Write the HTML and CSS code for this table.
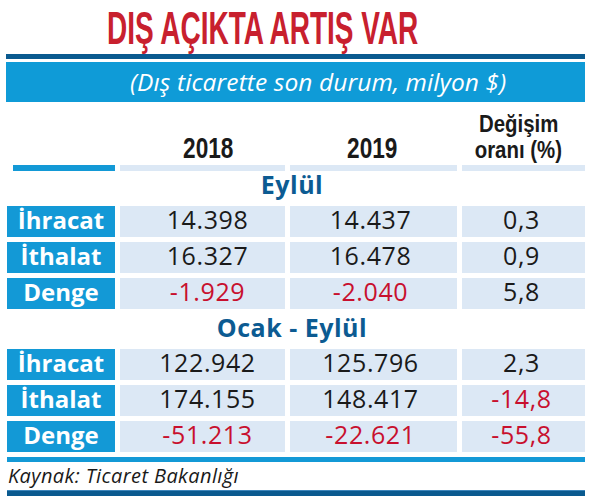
FILE: index.html
```html
<!DOCTYPE html>
<html lang="tr">
<head>
<meta charset="utf-8">
<title>Dış açıkta artış var</title>
<link rel="stylesheet" href="styles.css">
</head>
<body>
<div class="page">
  <h1 class="title"><span class="title-text">DIŞ AÇIKTA ARTIŞ VAR</span></h1>
  <div class="rule-dark"></div>
  <div class="subbar">(Dış ticarette son durum, milyon $)</div>

  <div class="grid head">
    <div></div>
    <div class="hcell c1"><span class="cond year">2018</span></div>
    <div class="hcell c2"><span class="cond year">2019</span></div>
    <div class="hcell c3"><span class="cond small">Değişim</span><span class="cond small">oranı (%)</span></div>
  </div>
  <div class="grid sep">
    <div class="sep-label"></div>
    <div class="sep-cell"></div>
    <div class="sep-cell"></div>
    <div class="sep-cell"></div>
  </div>

  <div class="section first">Eylül</div>
  <div class="grid rows">
    <div class="label">İhracat</div><div class="cell c1">14.398</div><div class="cell c2">14.437</div><div class="cell c3">0,3</div>
    <div class="label">İthalat</div><div class="cell c1">16.327</div><div class="cell c2">16.478</div><div class="cell c3">0,9</div>
    <div class="label">Denge</div><div class="cell c1 neg">-1.929</div><div class="cell c2 neg">-2.040</div><div class="cell c3">5,8</div>
  </div>

  <div class="section second">Ocak - Eylül</div>
  <div class="grid rows">
    <div class="label">İhracat</div><div class="cell c1">122.942</div><div class="cell c2">125.796</div><div class="cell c3">2,3</div>
    <div class="label">İthalat</div><div class="cell c1">174.155</div><div class="cell c2">148.417</div><div class="cell c3 neg">-14,8</div>
    <div class="label">Denge</div><div class="cell c1 neg">-51.213</div><div class="cell c2 neg">-22.621</div><div class="cell c3 neg">-55,8</div>
  </div>

  <div class="rule-blue"></div>
  <div class="source">Kaynak: Ticaret Bakanlığı</div>
  <div class="rule-bottom"></div>
</div>
</body>
</html>
```

FILE: styles.css
```css
html, body {
  margin: 0;
  padding: 0;
  background: #ffffff;
}

.page {
  width: 590px;
  font-family: "Open Sans", "Noto Sans", sans-serif;
  color: #1a1a1a;
}

.title {
  margin: 0;
  height: 54px;
  box-sizing: border-box;
  padding: 2px 0 0 107px;
  font-family: "Liberation Sans", Arial, sans-serif;
  font-weight: bold;
  font-size: 46px;
  line-height: 52px;
  color: #c8202e;
  white-space: nowrap;
}

.title-text {
  display: inline-block;
  transform: scaleX(0.608);
  transform-origin: left center;
}

.rule-dark {
  margin: 0 5px 0 6px;
  height: 5px;
  background: #0a5a8f;
}

.subbar {
  margin: 3px 5px 0 6px;
  height: 40px;
  box-sizing: border-box;
  padding-left: 124px;
  background: #0f9bd7;
  color: #ffffff;
  font-style: italic;
  font-size: 24.5px;
  letter-spacing: 0.1px;
  line-height: 40px;
  white-space: nowrap;
}

.grid {
  display: grid;
  grid-template-columns: 108px 165px 167px 123px;
  column-gap: 5px;
  margin-left: 7px;
  width: 578px;
}

.head {
  height: 63px;
  align-items: end;
  padding-bottom: 2px;
  box-sizing: border-box;
}

.hcell {
  display: flex;
  flex-direction: column;
  align-items: center;
  font-family: "Liberation Sans", Arial, sans-serif;
  font-weight: bold;
  color: #1a1a1a;
}

.cond {
  display: inline-block;
  white-space: nowrap;
}

.year {
  font-size: 29px;
  line-height: 29px;
  transform: scaleX(0.78);
}

.small {
  font-size: 24px;
  line-height: 26px;
  transform: scaleX(0.85);
}

.hcell.c1 { padding-left: 11px; }
.hcell.c2 { padding-right: 3px; }
.hcell.c3 { padding-right: 10px; }

.sep {
  height: 6px;
}

.sep-label {
  margin-left: 6px;
  background: #1399d6;
}

.sep-cell {
  background: #dce8f5;
}

.section {
  width: 578px;
  margin-left: 7px;
  text-align: center;
  font-weight: bold;
  font-size: 25px;
  letter-spacing: 0.5px;
  line-height: 24px;
  color: #0c5b92;
  padding-bottom: 10px;
  padding-right: 8px;
  box-sizing: border-box;
}

.section.first { padding-top: 1px; }
.section.second { padding-top: 6px; }

.rows {
  row-gap: 5px;
}

.label,
.cell {
  height: 31px;
  box-sizing: border-box;
  padding-bottom: 4px;
  line-height: 27px;
  font-size: 24px;
  text-align: center;
  white-space: nowrap;
}

.label {
  background: #1399d6;
  color: #ffffff;
  font-weight: bold;
}

.cell {
  background: #dce8f5;
  color: #1a1a1a;
  font-size: 25px;
  letter-spacing: 0.6px;
}

.cell.c1 { padding-left: 10px; }
.cell.c2 { padding-right: 6px; }
.cell.c3 { padding-right: 4px; }

.cell.neg {
  color: #c8102e;
}

.rule-blue {
  margin: 5px 5px 0 7px;
  height: 5px;
  background: #1399d6;
}

.source {
  height: 28px;
  padding-left: 8px;
  font-style: italic;
  font-size: 20px;
  letter-spacing: 0.4px;
  line-height: 28px;
  color: #1a1a1a;
  white-space: nowrap;
}

.rule-bottom {
  margin: 0 5px 0 7px;
  height: 5px;
  border-top: 1px solid #3d86bb;
  background: #0a5a8f;
}
```
